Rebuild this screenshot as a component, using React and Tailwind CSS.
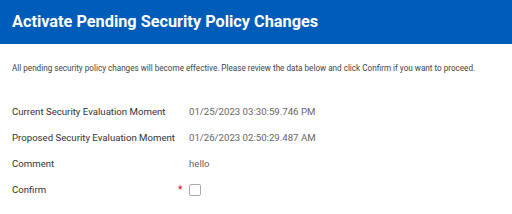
import React from "react";

const rows = [
  ["Current Security Evaluation Moment", "01/25/2023 03:30:59.746 PM"],
  ["Proposed Security Evaluation Moment", "01/26/2023 02:50:29.487 AM"],
  ["Comment", "hello"],
];

export default function App() {
  return (
    <div className="w-[512px] h-[214px] bg-white overflow-hidden" style={{ fontFamily: "Roboto, 'Liberation Sans', sans-serif" }}>
      <div className="h-[44px] bg-[#005cb9] flex items-center px-[12px]">
        <h1 className="text-white font-bold text-[16.3px] leading-none">Activate Pending Security Policy Changes</h1>
      </div>
      <p className="mt-[18px] px-[12px] text-[8.15px] text-[#444] leading-[12px]">
        All pending security policy changes will become effective. Please review the data below and click Confirm if you want to proceed.
      </p>
      <div className="mt-[25px] px-[12px] flex flex-col">
        {rows.map(([l, v]) => (
          <div key={l} className="flex items-center h-[26px]">
            <div className="w-[177px] text-[9.65px] text-[#333]">{l}</div>
            <div className="text-[9.65px] text-[#666]">{v}</div>
          </div>
        ))}
        <div className="flex items-center h-[26px]">
          <div className="w-[166px] text-[9.65px] text-[#333]">Confirm</div>
          <div className="w-[11px] text-[10px] text-[#d0021b] leading-none">*</div>
          <div className="w-[12px] h-[12px] border border-[#aaa] rounded-[2px] bg-white" />
        </div>
      </div>
    </div>
  );
}
